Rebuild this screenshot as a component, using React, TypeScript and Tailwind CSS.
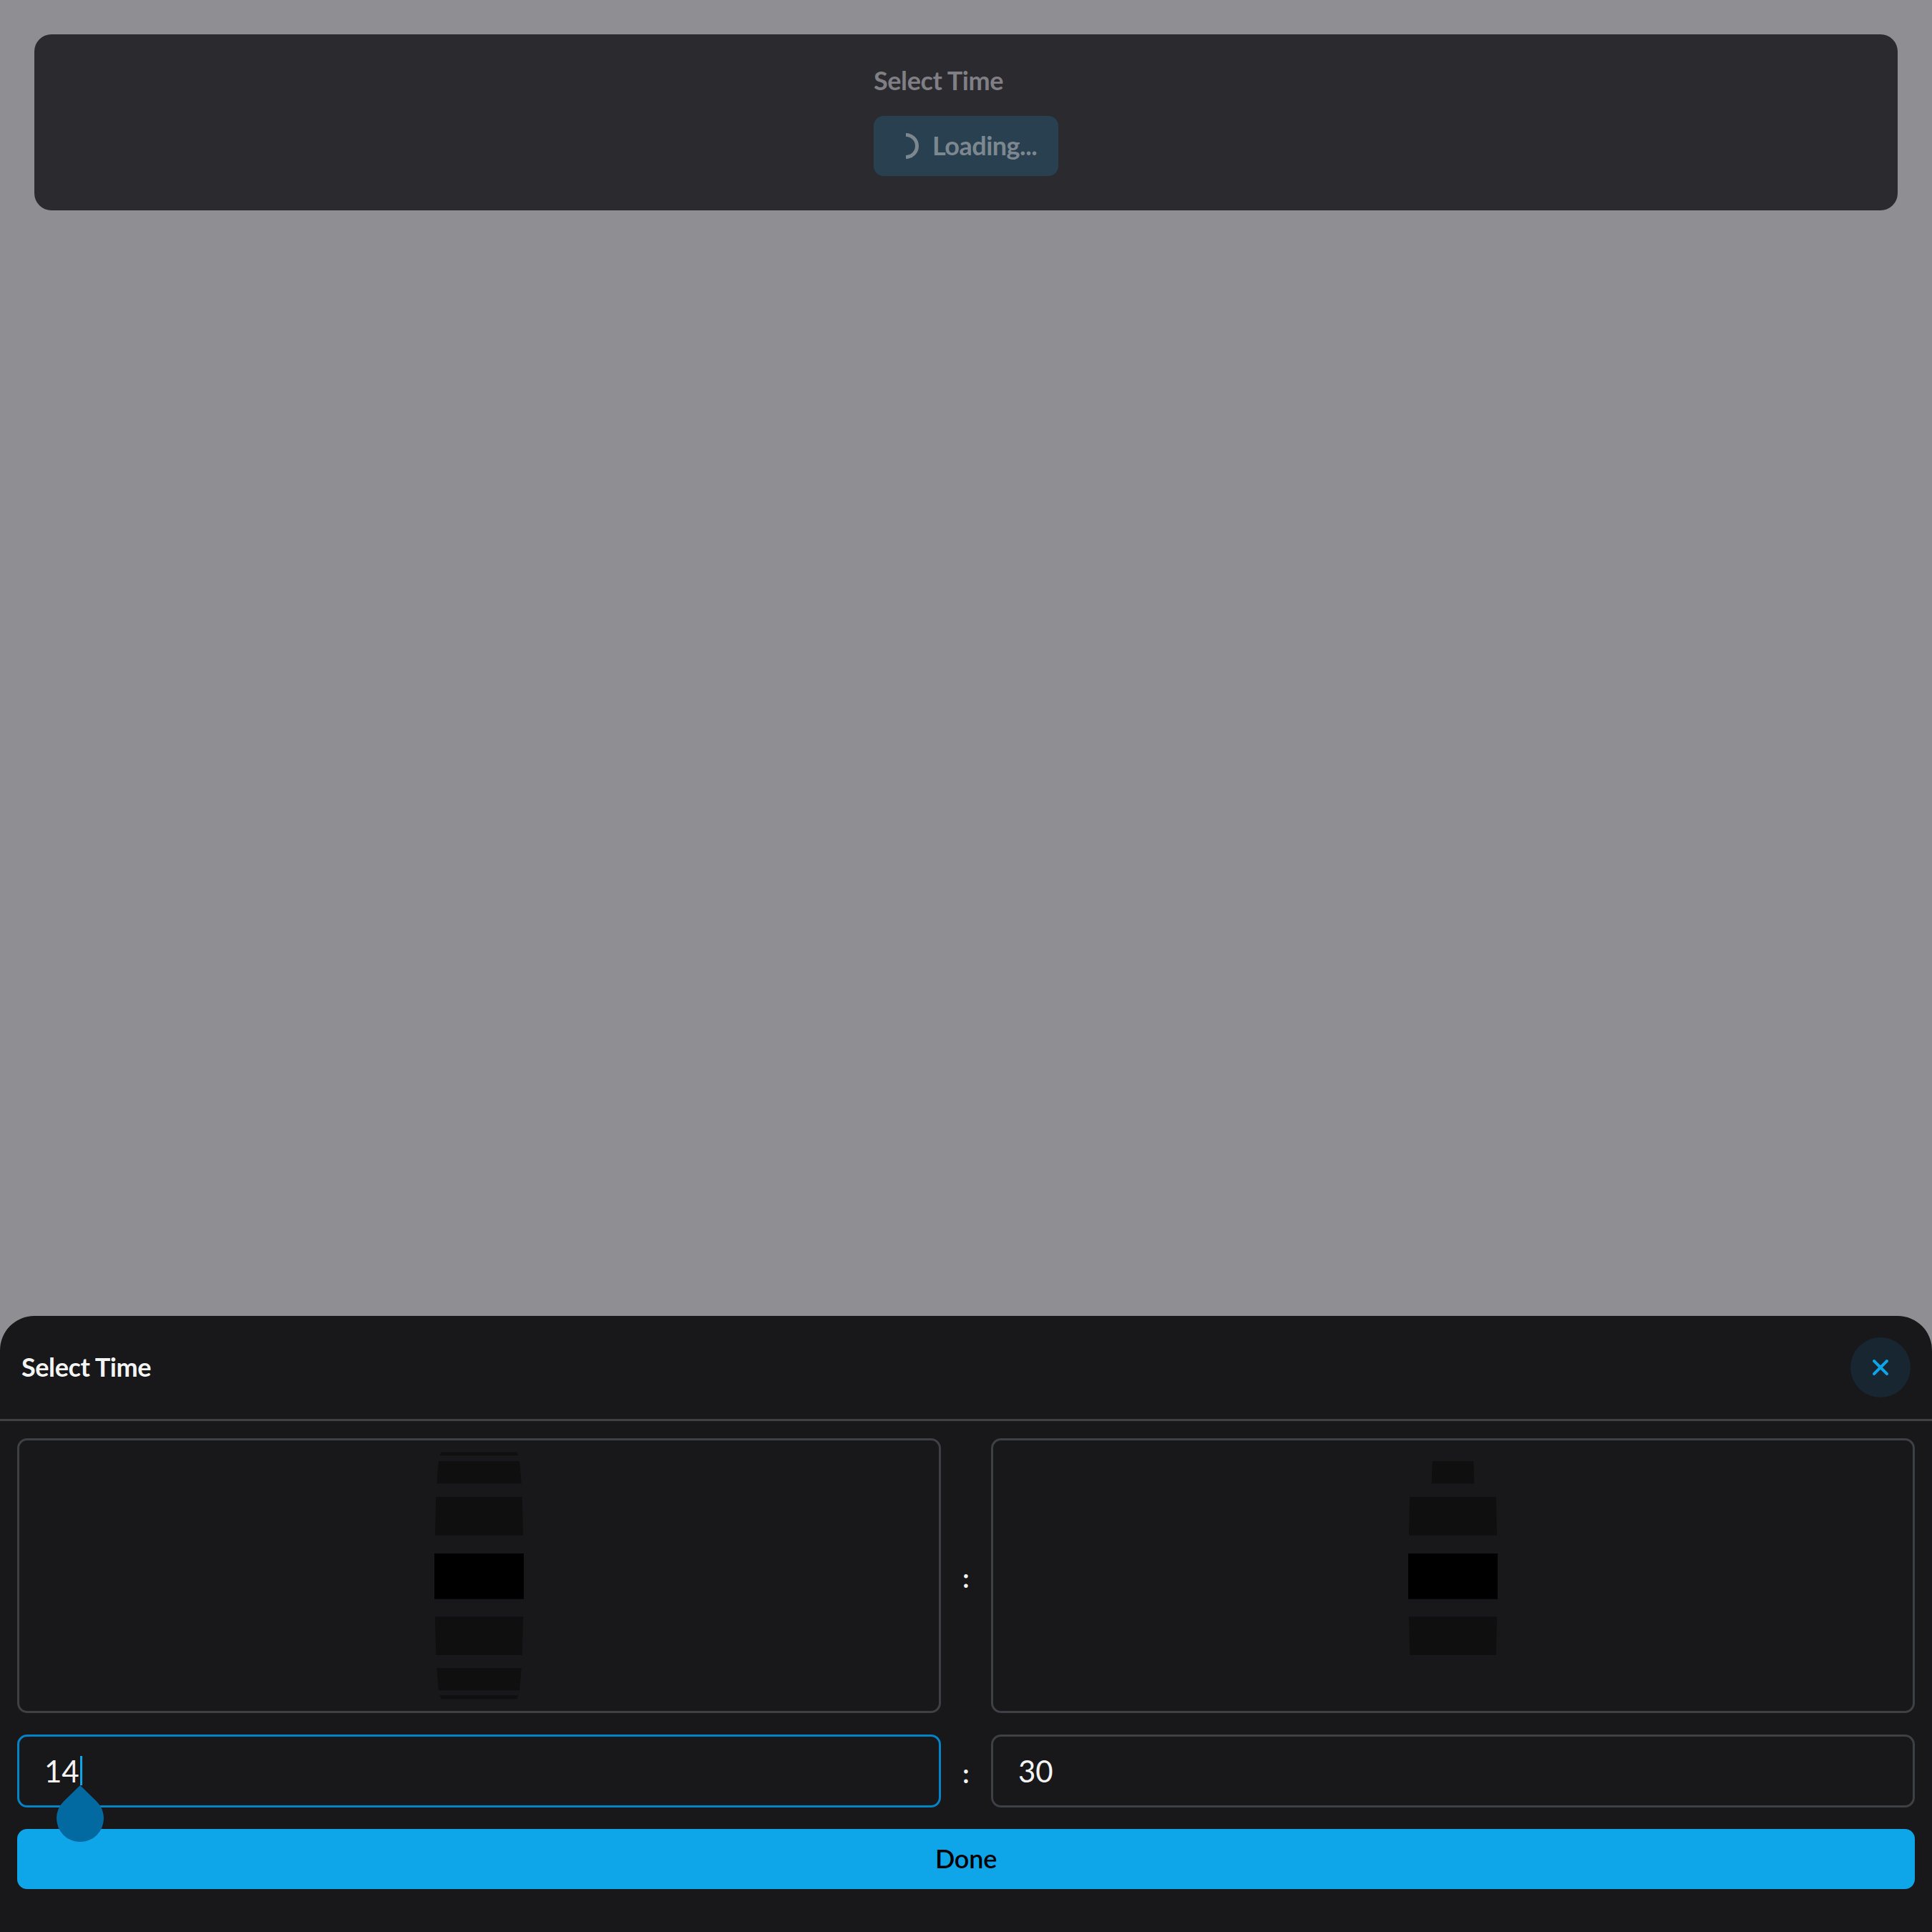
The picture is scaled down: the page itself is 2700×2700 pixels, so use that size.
import React from 'react'
import { X } from 'lucide-react'

const font = "font-['Lato',sans-serif]"

// rows of the time drum: top y, bottom y, inset at top, inset at bottom (px from each side of 125)
const leftRows = [
  { y1: 0.3, y2: 5, a: 9.7, b: 7.3 },
  { y1: 13, y2: 44.3, a: 6, b: 3.3 },
  { y1: 63, y2: 116.7, a: 2.3, b: 1 },
  { y1: 142, y2: 205.7, a: 0, b: 0, active: true },
  { y1: 230.3, y2: 284, a: 1, b: 2.3 },
  { y1: 302, y2: 333.3, a: 3.3, b: 6 },
  { y1: 340.3, y2: 345.3, a: 7.3, b: 9.7 },
]

const rightRows = [
  { y1: 13, y2: 44.3, a: 33.7, b: 32.7 },
  { y1: 63, y2: 116.7, a: 2.3, b: 1 },
  { y1: 142, y2: 205.7, a: 0, b: 0, active: true },
  { y1: 230.3, y2: 284, a: 1, b: 2.3 },
]

type Row = { y1: number; y2: number; a: number; b: number; active?: boolean }

const Wheel = ({ rows }: { rows: Row[] }) => (
  <div className="flex-1 min-w-0 h-[384px] rounded-[14px] border-[3px] border-[#3f3f46] flex items-center justify-center">
    <svg width="125" height="346" viewBox="0 0 125 346">
      {rows.map((r) => (
        <polygon
          key={r.y1}
          fill={r.active ? '#000000' : '#0f0f10'}
          points={`${r.a},${r.y1} ${125 - r.a},${r.y1} ${125 - r.b},${r.y2} ${r.b},${r.y2}`}
        />
      ))}
    </svg>
  </div>
)

const Colon = () => (
  <div className={`w-[70px] shrink-0 text-center text-[36px] leading-[44px] pt-[6px] font-bold text-[#f4f4f5] ${font}`}>:</div>
)

export default function App() {
  return (
    <div className={`w-[2700px] h-[2700px] bg-[#8f8e93] flex flex-col justify-between ${font}`}>
      {/* Page behind the sheet */}
      <div className="pt-[48px] px-[48px]">
        <div className="h-[246px] rounded-[24px] bg-[#2a2a2f] flex justify-center pt-[40px]">
          <div className="w-[258px]">
            <h2 className="text-[36px] leading-[48px] font-bold tracking-[-0.4px] text-[#807f85] mb-[26px]">Select Time</h2>
            <div className="h-[84px] rounded-[14px] bg-[#294050] flex items-center pl-[27px] gap-[19px] text-[36px] font-bold tracking-[-0.5px] text-[#7d878f]">
              <svg width="36" height="36" viewBox="0 0 36 36" fill="none" className="shrink-0">
                <path d="M18 2.5 A15.5 15.5 0 0 1 18 33.5" stroke="#7d878f" strokeWidth="5" />
              </svg>
              <span className="-mt-[2px]">Loading...</span>
            </div>
          </div>
        </div>
      </div>

      {/* Bottom sheet */}
      <div className="bg-[#18181b] rounded-t-[48px] pb-[60px]">
        <div className="h-[147px] border-b-[3px] border-[#3f3f46] flex items-center justify-between px-[30px]">
          <h2 className="-mt-[2px] text-[36px] font-bold tracking-[-0.4px] text-[#f4f4f5]">Select Time</h2>
          <button className="w-[84px] h-[84px] rounded-full bg-[#172630] flex items-center justify-center text-[#0ea5e9]">
            <X size={36} strokeWidth={2.6} />
          </button>
        </div>

        <div className="px-[24px] pt-[24px] flex flex-col gap-[30px]">
          <div className="flex items-center">
            <Wheel rows={leftRows} />
            <Colon />
            <Wheel rows={rightRows} />
          </div>

          <div className="flex items-center">
            <div className="relative flex-1 min-w-0">
              <input
                readOnly
                value="14"
                className={`w-full h-[102px] rounded-[14px] border-[3px] border-[#0284c7] bg-transparent px-[35px] text-[42px] text-[#f4f4f5] outline-none caret-transparent ${font}`}
              />
              <span className="absolute left-[88px] top-[30px] w-[3px] h-[41px] bg-[#0ea5e9]" />
              <svg width="66" height="79" viewBox="0 0 66 79" className="absolute left-[55px] top-[71px] z-10">
                <path d="M33 0 L56.3 22.7 A33 33 0 1 1 9.7 22.7 Z" fill="#0369a1" />
              </svg>
            </div>
            <Colon />
            <div className="flex-1 min-w-0">
              <input
                readOnly
                value="30"
                className={`w-full h-[102px] rounded-[14px] border-[3px] border-[#3f3f46] bg-transparent px-[35px] text-[42px] text-[#f4f4f5] outline-none caret-transparent ${font}`}
              />
            </div>
          </div>

          <button className={`pb-[2px] h-[84px] rounded-[14px] bg-[#0ea5e9] text-[36px] font-semibold tracking-[-0.2px] text-black ${font}`}>Done</button>
        </div>
      </div>
    </div>
  )
}
